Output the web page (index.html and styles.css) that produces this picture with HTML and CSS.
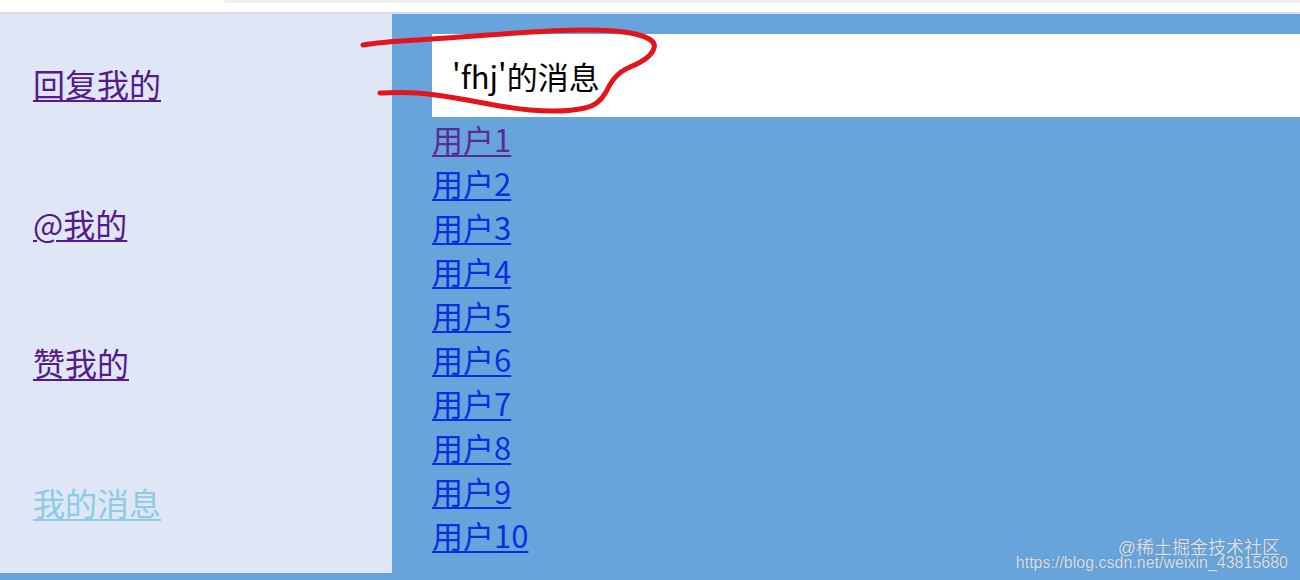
FILE: index.html
```html
<!DOCTYPE html>
<html lang="zh">
<head>
<meta charset="utf-8">
<title>我的消息</title>
<link rel="stylesheet" href="styles.css">
</head>
<body>
<div class="topbar"><div class="topbar-pill"></div></div>
<div class="page">
  <nav class="sidebar">
    <div class="nav-item"><a class="visited" href="#reply">回复我的</a></div>
    <div class="nav-item"><a class="visited" href="#at">@我的</a></div>
    <div class="nav-item"><a class="visited" href="#like">赞我的</a></div>
    <div class="nav-item"><a class="active" href="#msg">我的消息</a></div>
  </nav>
  <main class="content">
    <div class="header">'fhj'的消息</div>
    <ul class="users">
      <li><a class="visited" href="#u1">用户1</a></li>
      <li><a href="#u2">用户2</a></li>
      <li><a href="#u3">用户3</a></li>
      <li><a href="#u4">用户4</a></li>
      <li><a href="#u5">用户5</a></li>
      <li><a href="#u6">用户6</a></li>
      <li><a href="#u7">用户7</a></li>
      <li><a href="#u8">用户8</a></li>
      <li><a href="#u9">用户9</a></li>
      <li><a href="#u10">用户10</a></li>
    </ul>
  </main>
</div>
<div class="bottombar"></div>
<svg class="scribble" width="320" height="100" viewBox="350 25 320 100" aria-hidden="true">
  <path d="M363 45 C 380 42, 400 41, 417 40 C 450 38, 480 35, 517 33 C 545 31, 565 30, 583 30 C 605 30, 622 31, 635 34 C 649 37, 656 42, 654 48 C 652 55, 645 61, 630 67 C 616 73, 611 82, 606 92 C 601 101, 595 106, 585 108 C 572 111, 555 112, 530 110 C 505 108, 485 103, 467 100 C 445 96, 430 94, 417 93 C 400 92, 388 93, 380 93" fill="none" stroke="#e4141c" stroke-width="5" stroke-linecap="round" stroke-linejoin="round"/>
</svg>
<div class="watermark">
  <div class="wm-top">@稀土掘金技术社区</div>
  <div class="wm-bottom">https://blog.csdn.net/weixin_43815680</div>
</div>
</body>
</html>
```

FILE: styles.css
```css
html, body {
  margin: 0;
  padding: 0;
}
body {
  width: 1300px;
  height: 580px;
  overflow: hidden;
  font-family: "Noto Sans", "Noto Sans CJK SC", sans-serif;
  background: #ffffff;
  position: relative;
}
.topbar {
  height: 12px;
  background: #ffffff;
  border-bottom: 2px solid #dcdfe7;
  display: flex;
}
.topbar-pill {
  margin-left: 224px;
  flex: 1;
  height: 3px;
  background: #eef0f0;
  border-bottom-left-radius: 4px;
}
.page {
  display: flex;
  height: 559px;
}
.sidebar {
  width: 392px;
  background: #dfe7f6;
  display: flex;
  flex-direction: column;
}
.nav-item {
  flex: 1;
  display: flex;
  align-items: center;
  padding-left: 33px;
  padding-bottom: 2px;
  font-size: 32px;
  font-family: "Noto Sans CJK SC", sans-serif;
}
.nav-item a {
  color: #551a8b;
  text-decoration: underline;
  text-underline-offset: 3px;
  text-decoration-thickness: 2px;
}
.nav-item a.active {
  color: #8ccbe3;
}
.content {
  flex: 1;
  background: #68a4dc;
  padding-left: 40px;
  padding-top: 20px;
  font-family: "Noto Sans CJK SC", sans-serif;
}
.header {
  height: 83px;
  background: #ffffff;
  display: flex;
  align-items: center;
  padding-left: 20px;
  font-size: 31px;
  color: #000000;
}
.users {
  list-style: none;
  margin: 0;
  padding: 0;
}
.users li {
  height: 44px;
  line-height: 44px;
  font-size: 31px;
}
.users a {
  color: #0a2fe0;
  text-decoration: underline;
  text-underline-offset: 3px;
  text-decoration-thickness: 2px;
}
.users a.visited {
  color: #5a2a96;
}
.bottombar {
  height: 7px;
  background: #68a4dc;
}
.scribble {
  position: absolute;
  left: 350px;
  top: 25px;
}
.watermark {
  position: absolute;
  right: 12px;
  bottom: 9px;
  text-align: right;
  color: rgba(255, 255, 255, 0.78);
  text-shadow: 0 0 1px rgba(60, 60, 60, 0.5);
  font-family: "Liberation Sans", "Noto Sans CJK SC", sans-serif;
}
.wm-top {
  font-size: 18px;
  line-height: 13px;
  margin-right: 8px;
}
.wm-bottom {
  font-size: 16px;
  line-height: 16px;
}
```
